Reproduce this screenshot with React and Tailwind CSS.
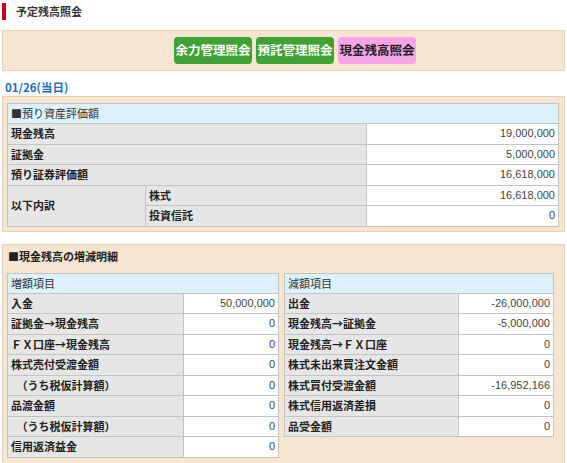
const assets = [
  { label: "現金残高", value: "19,000,000" },
  { label: "証拠金", value: "5,000,000" },
  { label: "預り証券評価額", value: "16,618,000" },
];

const increases = [
  { label: "入金", value: "50,000,000" },
  { label: "証拠金→現金残高", value: "0" },
  { label: "ＦＸ口座→現金残高", value: "0" },
  { label: "株式売付受渡金額", value: "0" },
  { label: "　（うち税仮計算額）", value: "0" },
  { label: "品渡金額", value: "0" },
  { label: "　（うち税仮計算額）", value: "0" },
  { label: "信用返済益金", value: "0" },
];

const decreases = [
  { label: "出金", value: "-26,000,000" },
  { label: "現金残高→証拠金", value: "-5,000,000" },
  { label: "現金残高→ＦＸ口座", value: "0" },
  { label: "株式未出来買注文金額", value: "0" },
  { label: "株式買付受渡金額", value: "-16,952,166" },
  { label: "株式信用返済差損", value: "0" },
  { label: "品受金額", value: "0" },
];

const num = "font-['Liberation_Sans',sans-serif] text-[#444] text-right pr-[3px] bg-white border border-[#c4c4c4]";
const lab = "font-bold text-[#222] pl-[3px] bg-[#e6e6e6] border border-[#c4c4c4]";
const head = "text-left font-normal text-[#333] pl-[3px] bg-[#ddf1fd] border border-[#c4c4c4]";

function Tab({ title, rows, labelW, valueW }) {
  return (
    <table className="border-collapse table-fixed">
      <colgroup>
        <col className={labelW} />
        <col className={valueW} />
      </colgroup>
      <thead>
        <tr className="h-[20px]">
          <th colSpan={2} className={head}>{title}</th>
        </tr>
      </thead>
      <tbody>
        {rows.map((r, i) => (
          <tr key={i} className="h-[20.5px]">
            <td className={`${lab} whitespace-pre`}>{r.label}</td>
            <td className={num}>{r.value}</td>
          </tr>
        ))}
      </tbody>
    </table>
  );
}

export default function App() {
  return (
    <div className="w-[567px] h-[463px] overflow-hidden bg-white text-[11px] leading-none font-['Noto_Sans_CJK_JP','Noto_Sans',sans-serif]">
      <div className="flex items-center h-[23px]">
        <div className="ml-[2px] w-[4px] h-[17px] bg-[#c8001e]" />
        <span className="ml-[10px] font-bold text-[#333]">予定残高照会</span>
      </div>

      <div className="mt-[7px] mx-[2px] h-[41px] border border-[#ead2b1] bg-[#f6e6d1] flex items-center pl-[171px] gap-[4px]">
        <button className="w-[78px] h-[27px] rounded-[4px] bg-[#3fa333] text-white text-[12.5px] font-bold">余力管理照会</button>
        <button className="w-[78px] h-[27px] rounded-[4px] bg-[#3fa333] text-white text-[12.5px] font-bold">預託管理照会</button>
        <button className="w-[78px] h-[27px] rounded-[4px] bg-[#f6a6e6] text-[#222] text-[12.5px] font-bold">現金残高照会</button>
      </div>

      <div className="h-[25px] flex items-center pl-[5px] pt-[8px] font-bold text-[#1e6cc6] text-[11.5px]">01/26(当日)</div>

      <div className="mx-[2px] border border-[#ead2b1] bg-[#f6e6d1] px-[4px] pt-[6px] pb-[4px]">
        <table className="border-collapse table-fixed">
          <colgroup>
            <col className="w-[138px]" />
            <col className="w-[221px]" />
            <col className="w-[192px]" />
          </colgroup>
          <thead>
            <tr className="h-[20px]">
              <th colSpan={3} className={head}>■預り資産評価額</th>
            </tr>
          </thead>
          <tbody>
            {assets.map((r) => (
              <tr key={r.label} className="h-[20.5px]">
                <td colSpan={2} className={lab}>{r.label}</td>
                <td className={num}>{r.value}</td>
              </tr>
            ))}
            <tr className="h-[20.5px]">
              <td rowSpan={2} className={lab}>以下内訳</td>
              <td className={lab}>株式</td>
              <td className={num}>16,618,000</td>
            </tr>
            <tr className="h-[20.5px]">
              <td className={lab}>投資信託</td>
              <td className={num}>0</td>
            </tr>
          </tbody>
        </table>
      </div>

      <div className="mt-[12px] mx-[2px] h-[240px] border border-[#ead2b1] bg-[#f6e6d1] px-[4px]">
        <div className="h-[22px] flex items-center pl-[1px] pt-[2px] font-bold text-[#222]">■現金残高の増減明細</div>
        <div className="mt-[6px] flex items-start gap-[5px]">
          <Tab title="増額項目" rows={increases} labelW="w-[176px]" valueW="w-[95px]" />
          <Tab title="減額項目" rows={decreases} labelW="w-[174px]" valueW="w-[95px]" />
        </div>
      </div>
    </div>
  );
}
